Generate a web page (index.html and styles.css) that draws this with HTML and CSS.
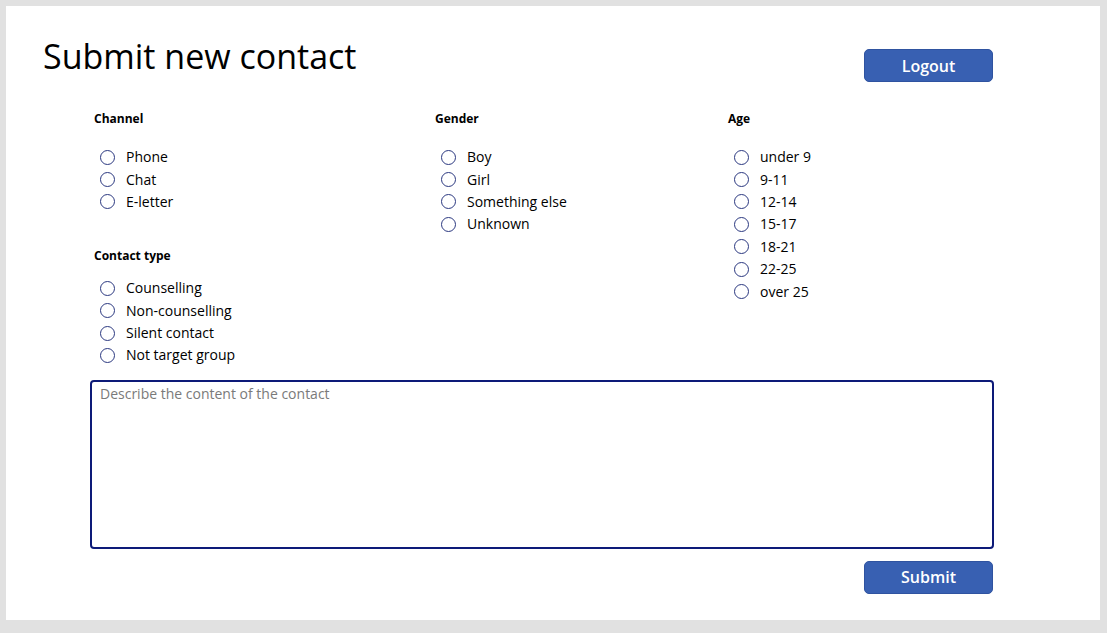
FILE: index.html
```html
<!DOCTYPE html>
<html lang="en">
<head>
<meta charset="utf-8">
<title>Submit new contact</title>
<link rel="stylesheet" href="styles.css">
</head>
<body>
<div class="card">
  <div class="header">
    <h1 class="title">Submit new contact</h1>
    <button class="btn btn-logout">Logout</button>
  </div>
  <div class="grid">
    <div class="col col-1">
      <div class="group">
        <div class="label">Channel</div>
        <div class="options">
          <div class="opt"><span class="radio"></span><span class="txt">Phone</span></div>
          <div class="opt"><span class="radio"></span><span class="txt">Chat</span></div>
          <div class="opt"><span class="radio"></span><span class="txt">E-letter</span></div>
        </div>
      </div>
      <div class="group group-second">
        <div class="label">Contact type</div>
        <div class="options options-tight">
          <div class="opt"><span class="radio"></span><span class="txt">Counselling</span></div>
          <div class="opt"><span class="radio"></span><span class="txt">Non-counselling</span></div>
          <div class="opt"><span class="radio"></span><span class="txt">Silent contact</span></div>
          <div class="opt"><span class="radio"></span><span class="txt">Not target group</span></div>
        </div>
      </div>
    </div>
    <div class="col col-2">
      <div class="group">
        <div class="label">Gender</div>
        <div class="options">
          <div class="opt"><span class="radio"></span><span class="txt">Boy</span></div>
          <div class="opt"><span class="radio"></span><span class="txt">Girl</span></div>
          <div class="opt"><span class="radio"></span><span class="txt">Something else</span></div>
          <div class="opt"><span class="radio"></span><span class="txt">Unknown</span></div>
        </div>
      </div>
    </div>
    <div class="col col-3">
      <div class="group">
        <div class="label">Age</div>
        <div class="options">
          <div class="opt"><span class="radio"></span><span class="txt">under 9</span></div>
          <div class="opt"><span class="radio"></span><span class="txt">9-11</span></div>
          <div class="opt"><span class="radio"></span><span class="txt">12-14</span></div>
          <div class="opt"><span class="radio"></span><span class="txt">15-17</span></div>
          <div class="opt"><span class="radio"></span><span class="txt">18-21</span></div>
          <div class="opt"><span class="radio"></span><span class="txt">22-25</span></div>
          <div class="opt"><span class="radio"></span><span class="txt">over 25</span></div>
        </div>
      </div>
    </div>
  </div>
  <textarea class="content" placeholder="Describe the content of the contact"></textarea>
  <div class="footer">
    <button class="btn btn-submit">Submit</button>
  </div>
</div>
</body>
</html>
```

FILE: styles.css
```css
* { box-sizing: border-box; }
html, body { margin: 0; padding: 0; }
body {
  background: #e1e1e1;
  padding: 6px 7px 13px 6px;
  font-family: "Open Sans", "Liberation Sans", sans-serif;
  color: #000;
  width: 1107px;
  height: 633px;
  overflow: hidden;
}
.card {
  background: #fff;
  width: 1094px;
  height: 614px;
  padding: 25px 107px 0 35px;
}
.header {
  display: flex;
  justify-content: space-between;
  align-items: flex-start;
  height: 44px;
}
.title {
  margin: 3px 0 0 2px;
  font-size: 34px;
  line-height: 44px;
  font-weight: 400;
  letter-spacing: 0;
}
.btn {
  width: 129px;
  height: 33px;
  background: #3860b2;
  border: 1px solid #2f53a0;
  border-radius: 5px;
  color: #fff;
  font-family: "Open Sans", "Liberation Sans", sans-serif;
  font-size: 16px;
  font-weight: 600;
  padding: 0;
  line-height: 30px;
}
.btn-logout { margin-top: 18px; }
.grid {
  display: grid;
  grid-template-columns: 341px 293px 1fr;
  margin: 36px 0 0 53px;
}
.label {
  font-size: 12px;
  font-weight: 700;
  line-height: 16px;
  height: 16px;
}
.options {
  margin-top: 19px;
  display: flex;
  flex-direction: column;
}
.opt {
  display: flex;
  align-items: center;
  height: 22.4px;
  font-size: 14px;
  padding-left: 6px;
}
.options-tight { margin-top: 13px; }
.options-tight .opt { height: 22.35px; }
.radio {
  width: 15px;
  height: 15px;
  border: 1.4px solid #2b3880;
  border-radius: 50%;
  flex: none;
}
.txt { margin-left: 11px; line-height: 20px; }
.group-second { margin-top: 35px; }
.content {
  display: block;
  margin: 13px 0 0 49px;
  width: 904px;
  height: 169px;
  border: 2px solid #0d1a78;
  border-radius: 4px;
  padding: 2px 8px;
  font-family: "Open Sans", "Liberation Sans", sans-serif;
  font-size: 14px;
  line-height: 20px;
  resize: none;
  outline: none;
}
.content::placeholder { color: #7a7a7a; }
.footer {
  display: flex;
  justify-content: flex-end;
  margin-top: 12px;
}
```
